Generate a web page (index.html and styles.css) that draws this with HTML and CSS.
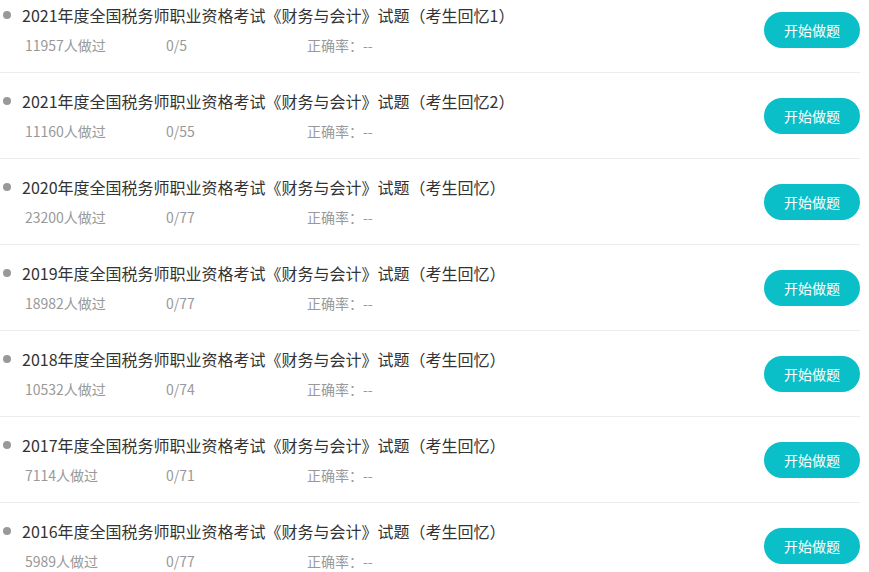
FILE: index.html
```html
<!DOCTYPE html>
<html lang="zh-CN">
<head>
  <meta charset="UTF-8">
  <title>试题列表</title>
  <link rel="stylesheet" href="styles.css">
</head>
<body>
  <ul class="paper-list">
    <li class="paper">
      <div class="paper-info">
        <div class="paper-title">2021年度全国税务师职业资格考试《财务与会计》试题（考生回忆1）</div>
        <div class="paper-stats">
          <span class="stat">11957人做过</span>
          <span class="stat">0/5</span>
          <span class="stat">正确率：--</span>
        </div>
      </div>
      <button class="start-btn">开始做题</button>
    </li>
    <li class="paper">
      <div class="paper-info">
        <div class="paper-title">2021年度全国税务师职业资格考试《财务与会计》试题（考生回忆2）</div>
        <div class="paper-stats">
          <span class="stat">11160人做过</span>
          <span class="stat">0/55</span>
          <span class="stat">正确率：--</span>
        </div>
      </div>
      <button class="start-btn">开始做题</button>
    </li>
    <li class="paper">
      <div class="paper-info">
        <div class="paper-title">2020年度全国税务师职业资格考试《财务与会计》试题（考生回忆）</div>
        <div class="paper-stats">
          <span class="stat">23200人做过</span>
          <span class="stat">0/77</span>
          <span class="stat">正确率：--</span>
        </div>
      </div>
      <button class="start-btn">开始做题</button>
    </li>
    <li class="paper">
      <div class="paper-info">
        <div class="paper-title">2019年度全国税务师职业资格考试《财务与会计》试题（考生回忆）</div>
        <div class="paper-stats">
          <span class="stat">18982人做过</span>
          <span class="stat">0/77</span>
          <span class="stat">正确率：--</span>
        </div>
      </div>
      <button class="start-btn">开始做题</button>
    </li>
    <li class="paper">
      <div class="paper-info">
        <div class="paper-title">2018年度全国税务师职业资格考试《财务与会计》试题（考生回忆）</div>
        <div class="paper-stats">
          <span class="stat">10532人做过</span>
          <span class="stat">0/74</span>
          <span class="stat">正确率：--</span>
        </div>
      </div>
      <button class="start-btn">开始做题</button>
    </li>
    <li class="paper">
      <div class="paper-info">
        <div class="paper-title">2017年度全国税务师职业资格考试《财务与会计》试题（考生回忆）</div>
        <div class="paper-stats">
          <span class="stat">7114人做过</span>
          <span class="stat">0/71</span>
          <span class="stat">正确率：--</span>
        </div>
      </div>
      <button class="start-btn">开始做题</button>
    </li>
    <li class="paper">
      <div class="paper-info">
        <div class="paper-title">2016年度全国税务师职业资格考试《财务与会计》试题（考生回忆）</div>
        <div class="paper-stats">
          <span class="stat">5989人做过</span>
          <span class="stat">0/77</span>
          <span class="stat">正确率：--</span>
        </div>
      </div>
      <button class="start-btn">开始做题</button>
    </li>
  </ul>
</body>
</html>
```

FILE: styles.css
```css
* {
  box-sizing: border-box;
}

body {
  margin: 0;
  background: #ffffff;
  font-family: "Noto Sans CJK SC", "Noto Sans", sans-serif;
  color: #333;
  overflow: hidden;
}

.paper-list {
  list-style: none;
  margin: -13px 0 0 0;
  padding: 0;
  width: 860px;
}

.paper {
  display: flex;
  align-items: center;
  justify-content: space-between;
  height: 86px;
  border-bottom: 1px solid #ececec;
}

.paper-info {
  display: flex;
  flex-direction: column;
  gap: 8px;
}

.paper-title {
  position: relative;
  padding-left: 22px;
  font-size: 16px;
  line-height: 22px;
  color: #333;
}

.paper-title::before {
  content: "";
  position: absolute;
  left: 3px;
  top: 7px;
  width: 8px;
  height: 8px;
  border-radius: 50%;
  background: #999;
}

.paper-stats {
  display: flex;
  padding-left: 25px;
  font-size: 14px;
  line-height: 22px;
  color: #999;
}

.stat {
  width: 141px;
}

.start-btn {
  width: 96px;
  height: 36px;
  border: none;
  border-radius: 18px;
  background: #0bbfc8;
  color: #fff;
  font-family: inherit;
  font-size: 14px;
  cursor: pointer;
}
```
